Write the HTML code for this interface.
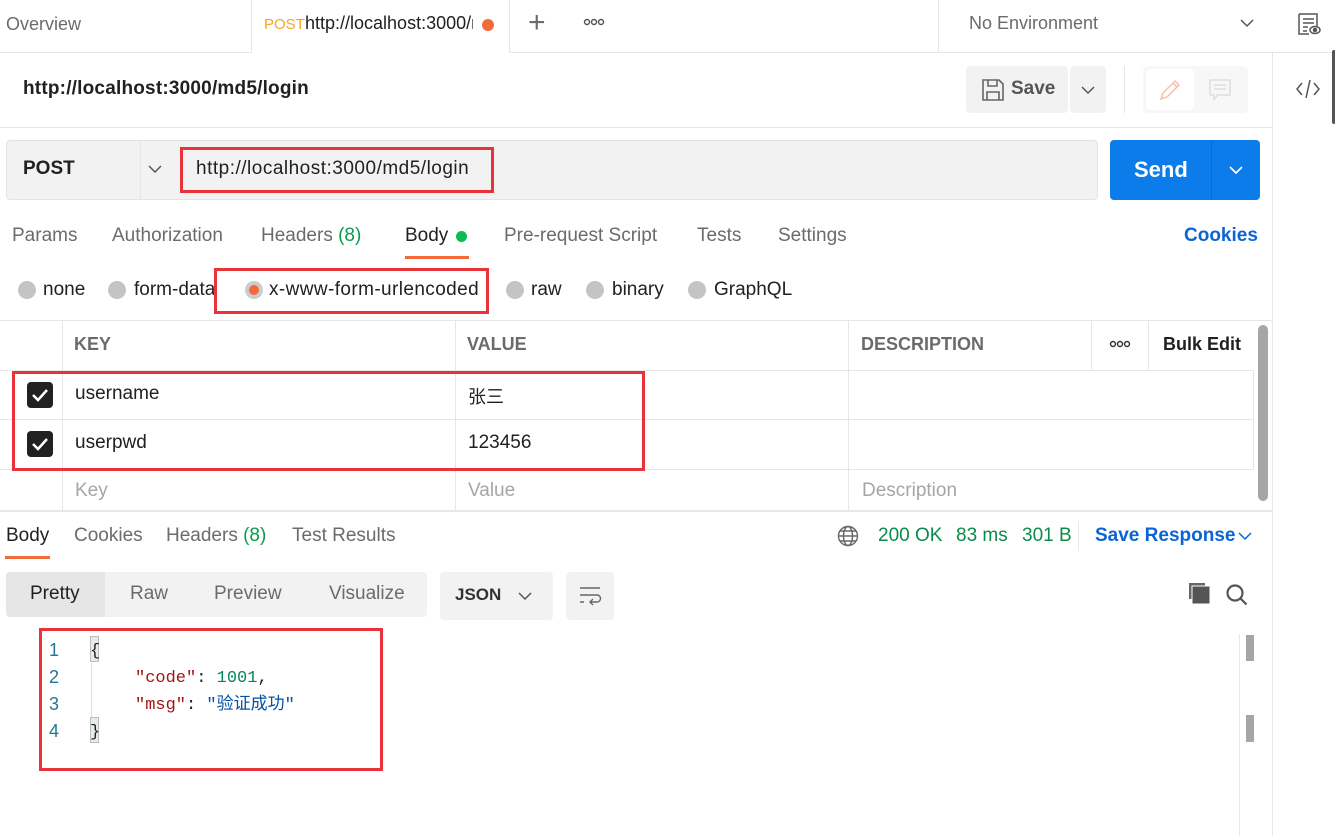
<!DOCTYPE html>
<html><head><meta charset="utf-8"><style>
*{margin:0;padding:0;box-sizing:border-box}
body{width:1335px;height:836px;position:relative;overflow:hidden;background:#fff;font-family:"Liberation Sans","Noto Sans CJK SC",sans-serif;font-size:19px;color:#212121}
.a{position:absolute;white-space:nowrap}
.g{color:#6b6b6b}
.red{position:absolute;border:3px solid #e8333a}
.hl{position:absolute;background:#e6e6e6}
.vl{position:absolute;background:#e6e6e6;width:1px}
.rad{position:absolute;width:18px;height:18px;border-radius:50%;background:#c4c4c4}
.cb{position:absolute;width:26px;height:26px;background:#212121;border-radius:4px}
.mono{font-family:"Liberation Mono","Noto Sans CJK SC",monospace;font-size:17px}
</style></head><body>
<!-- top bar -->
<div class="hl" style="left:0;top:52px;width:1335px;height:1px"></div>
<div class="a g" style="left:6px;top:14px;font-size:18px">Overview</div>
<div class="a" style="left:251px;top:0;width:259px;height:53px;background:#fff;border-left:1px solid #e6e6e6;border-right:1px solid #e6e6e6"></div>
<div class="a" style="left:264px;top:16px;font-size:15px;color:#f5a623">POST</div>
<div class="a" style="left:305px;top:13px;width:168px;overflow:hidden;font-size:18px">http://localhost:3000/md5/login</div>
<div class="a" style="left:482px;top:19px;width:12px;height:12px;border-radius:50%;background:#f26b3a"></div>
<div class="a g" style="left:528px;top:6px;font-size:30px;font-weight:300">+</div>
<svg class="a" style="left:583px;top:18px" width="22" height="8" viewBox="0 0 22 8" fill="none" stroke="#555" stroke-width="1.4"><circle cx="4" cy="4" r="2.5"/><circle cx="11" cy="4" r="2.5"/><circle cx="18" cy="4" r="2.5"/></svg>
<div class="vl" style="left:938px;top:0;height:53px"></div>
<div class="a g" style="left:969px;top:13px;font-size:18px">No Environment</div>
<svg class="a" style="left:1240px;top:16px" width="14" height="14" viewBox="0 0 14 14"><path d="M1 4l6 6 6-6" fill="none" stroke="#555" stroke-width="1.5"/></svg>
<svg class="a" style="left:1297px;top:12px" width="24" height="24" viewBox="0 0 24 24" fill="none" stroke="#555" stroke-width="1.5"><path d="M2 2h18v12M2 2v20h10M6 7h11M6 11h11M6 15h5M6 19h4"/><ellipse cx="18" cy="18" rx="5" ry="3.5"/><circle cx="18" cy="18" r="1.5" fill="#555"/></svg>
<!-- right sidebar -->
<div class="vl" style="left:1272px;top:53px;height:783px"></div>
<div class="a" style="left:1332px;top:50px;width:4px;height:74px;background:#555;border-radius:3px"></div>
<svg class="a" style="left:1295px;top:78px" width="26" height="22" viewBox="0 0 26 22" fill="none" stroke="#555" stroke-width="1.5"><path d="M7 5l-5 6 5 6M19 5l5 6-5 6M15 2l-4 18"/></svg>
<!-- title row -->
<div class="a" style="left:23px;top:78px;font-size:19px;font-weight:bold;color:#212121;letter-spacing:0.2px">http://localhost:3000/md5/login</div>
<div class="a" style="left:966px;top:66px;width:102px;height:47px;background:#f2f2f2;border-radius:4px"></div>
<svg class="a" style="left:981px;top:78px" width="24" height="24" viewBox="0 0 24 24" fill="none" stroke="#666" stroke-width="1.6"><path d="M2 2h16l4 4v16H2z M7 2v6h9V2 M6 22v-8h12v8"/></svg>
<div class="a" style="left:1011px;top:78px;font-size:19px;font-weight:bold;color:#555">Save</div>
<div class="a" style="left:1070px;top:66px;width:36px;height:47px;background:#f2f2f2;border-radius:4px"></div>
<svg class="a" style="left:1080px;top:84px" width="16" height="12" viewBox="0 0 16 12"><path d="M2 3l6 6 6-6" fill="none" stroke="#555" stroke-width="1.5"/></svg>
<div class="vl" style="left:1124px;top:66px;height:47px"></div>
<div class="a" style="left:1143px;top:66px;width:105px;height:47px;background:#f7f7f7;border-radius:5px"></div>
<div class="a" style="left:1146px;top:69px;width:48px;height:41px;background:#fff;border-radius:4px"></div>
<svg class="a" style="left:1158px;top:78px" width="24" height="24" viewBox="0 0 24 24" fill="none" stroke="#f7c0ab" stroke-width="1.5"><path d="M3 21l2-6L17 3l4 4L9 19z M15 5l4 4"/></svg>
<svg class="a" style="left:1208px;top:78px" width="24" height="24" viewBox="0 0 24 24" fill="none" stroke="#ddd" stroke-width="1.5"><path d="M2 2h20v15H10l-4 4v-4H2z M6 7h12M6 11h12"/></svg>
<div class="hl" style="left:0;top:127px;width:1272px;height:1px"></div>
<!-- url bar -->
<div class="a" style="left:6px;top:140px;width:1092px;height:60px;background:#f2f2f2;border:1px solid #e4e4e4;border-radius:4px"></div>
<div class="vl" style="left:140px;top:141px;height:58px"></div>
<div class="a" style="left:23px;top:158px;font-weight:bold;font-size:19px">POST</div>
<svg class="a" style="left:148px;top:163px" width="14" height="12" viewBox="0 0 14 12"><path d="M1 3l6 6 6-6" fill="none" stroke="#555" stroke-width="1.5"/></svg>
<div class="red" style="left:180px;top:147px;width:314px;height:46px"></div>
<div class="a" style="left:196px;top:158px;font-size:19px;letter-spacing:0.5px">http://localhost:3000/md5/login</div>
<div class="a" style="left:1110px;top:140px;width:150px;height:60px;background:#0b7cea;border-radius:4px"></div>
<div class="a" style="left:1211px;top:140px;width:1px;height:60px;background:#0a6ccc"></div>
<div class="a" style="left:1134px;top:157px;font-size:22px;font-weight:bold;color:#fff">Send</div>
<svg class="a" style="left:1228px;top:164px" width="16" height="12" viewBox="0 0 16 12"><path d="M2 3l6 6 6-6" fill="none" stroke="#fff" stroke-width="1.7"/></svg>
<!-- tabs -->
<div class="a g" style="left:12px;top:225px">Params</div>
<div class="a g" style="left:112px;top:225px">Authorization</div>
<div class="a g" style="left:261px;top:225px">Headers <span style="color:#0c9a4e">(8)</span></div>
<div class="a" style="left:405px;top:225px">Body</div>
<div class="a" style="left:456px;top:231px;width:11px;height:11px;border-radius:50%;background:#0cbb52"></div>
<div class="a" style="left:405px;top:256px;width:64px;height:3px;background:#f26b3a"></div>
<div class="a g" style="left:504px;top:225px">Pre-request Script</div>
<div class="a g" style="left:697px;top:225px">Tests</div>
<div class="a g" style="left:778px;top:225px">Settings</div>
<div class="a" style="left:1184px;top:225px;font-weight:bold;color:#0b64d4">Cookies</div>
<!-- radios -->
<div class="rad" style="left:18px;top:281px"></div><div class="a" style="left:43px;top:279px">none</div>
<div class="rad" style="left:108px;top:281px"></div><div class="a" style="left:134px;top:279px">form-data</div>
<div class="rad" style="left:245px;top:281px;background:#ccc"></div><div class="a" style="left:249px;top:285px;width:10px;height:10px;border-radius:50%;background:#f26b3a"></div>
<div class="a" style="left:269px;top:279px;letter-spacing:0.4px">x-www-form-urlencoded</div>
<div class="red" style="left:214px;top:268px;width:275px;height:46px"></div>
<div class="rad" style="left:506px;top:281px"></div><div class="a" style="left:531px;top:279px">raw</div>
<div class="rad" style="left:586px;top:281px"></div><div class="a" style="left:612px;top:279px">binary</div>
<div class="rad" style="left:688px;top:281px"></div><div class="a" style="left:714px;top:279px">GraphQL</div>
<!-- table -->
<div class="hl" style="left:0;top:320px;width:1272px;height:1px"></div>
<div class="hl" style="left:0;top:370px;width:1254px;height:1px"></div>
<div class="hl" style="left:0;top:419px;width:1254px;height:1px"></div>
<div class="hl" style="left:0;top:469px;width:1254px;height:1px"></div>
<div class="vl" style="left:62px;top:320px;height:191px"></div>
<div class="vl" style="left:455px;top:320px;height:191px"></div>
<div class="vl" style="left:848px;top:320px;height:191px"></div>
<div class="vl" style="left:1091px;top:320px;height:50px"></div>
<div class="vl" style="left:1148px;top:320px;height:50px"></div>
<div class="vl" style="left:1253px;top:370px;height:99px"></div>
<div class="a" style="left:1258px;top:325px;width:10px;height:176px;background:#a6a6a6;border-radius:5px"></div>
<div class="a g" style="left:74px;top:334px;font-weight:bold;font-size:18px">KEY</div>
<div class="a g" style="left:467px;top:334px;font-weight:bold;font-size:18px">VALUE</div>
<div class="a g" style="left:861px;top:334px;font-weight:bold;font-size:18px">DESCRIPTION</div>
<svg class="a" style="left:1109px;top:340px" width="22" height="8" viewBox="0 0 22 8" fill="none" stroke="#333" stroke-width="1.4"><circle cx="4" cy="4" r="2.5"/><circle cx="11" cy="4" r="2.5"/><circle cx="18" cy="4" r="2.5"/></svg>
<div class="a" style="left:1163px;top:334px;font-weight:bold;font-size:18px">Bulk Edit</div>
<div class="cb" style="left:27px;top:382px"></div>
<svg class="a" style="left:31px;top:387px" width="18" height="16" viewBox="0 0 18 16"><path d="M2 8l5 5 9-10" fill="none" stroke="#fff" stroke-width="2.5"/></svg>
<div class="cb" style="left:27px;top:431px"></div>
<svg class="a" style="left:31px;top:436px" width="18" height="16" viewBox="0 0 18 16"><path d="M2 8l5 5 9-10" fill="none" stroke="#fff" stroke-width="2.5"/></svg>
<div class="a" style="left:75px;top:383px">username</div>
<div class="a" style="left:468px;top:383px;font-size:18px">张三</div>
<div class="a" style="left:75px;top:432px">userpwd</div>
<div class="a" style="left:468px;top:432px">123456</div>
<div class="red" style="left:12px;top:371px;width:633px;height:100px"></div>
<div class="a" style="left:75px;top:480px;color:#a6a6a6">Key</div>
<div class="a" style="left:468px;top:480px;color:#a6a6a6">Value</div>
<div class="a" style="left:862px;top:480px;color:#a6a6a6">Description</div>
<div class="a" style="left:0;top:510px;width:1272px;height:2px;background:#e8e8e8"></div>
<!-- response -->
<div class="a" style="left:6px;top:525px">Body</div>
<div class="a" style="left:5px;top:556px;width:45px;height:3px;background:#f26b3a"></div>
<div class="a g" style="left:74px;top:525px">Cookies</div>
<div class="a g" style="left:166px;top:525px">Headers <span style="color:#0c9a4e">(8)</span></div>
<div class="a g" style="left:292px;top:525px">Test Results</div>
<svg class="a" style="left:837px;top:525px" width="22" height="22" viewBox="0 0 22 22" fill="none" stroke="#666" stroke-width="1.4"><circle cx="11" cy="11" r="9.5"/><ellipse cx="11" cy="11" rx="4.5" ry="9.5"/><path d="M1.5 11h19M3 6h16M3 16h16"/></svg>
<div class="a" style="left:878px;top:525px;color:#0c8a4a">200 OK</div>
<div class="a" style="left:956px;top:525px;color:#0c8a4a">83 ms</div>
<div class="a" style="left:1022px;top:525px;color:#0c8a4a">301 B</div>
<div class="vl" style="left:1078px;top:521px;height:30px"></div>
<div class="a" style="left:1095px;top:525px;font-weight:bold;color:#0b64d4">Save Response</div>
<svg class="a" style="left:1238px;top:530px" width="14" height="12" viewBox="0 0 14 12"><path d="M1 3l6 6 6-6" fill="none" stroke="#0b64d4" stroke-width="1.5"/></svg>
<div class="a" style="left:6px;top:572px;width:421px;height:45px;background:#f2f2f2;border-radius:4px"></div>
<div class="a" style="left:6px;top:572px;width:99px;height:45px;background:#e6e6e6;border-radius:4px 0 0 4px"></div>
<div class="a" style="left:30px;top:583px">Pretty</div>
<div class="a g" style="left:130px;top:583px">Raw</div>
<div class="a g" style="left:214px;top:583px">Preview</div>
<div class="a g" style="left:329px;top:583px">Visualize</div>
<div class="a" style="left:440px;top:572px;width:113px;height:48px;background:#f2f2f2;border-radius:4px"></div>
<div class="a" style="left:455px;top:585px;font-weight:bold;font-size:17px;color:#333">JSON</div>
<svg class="a" style="left:518px;top:590px" width="14" height="12" viewBox="0 0 14 12"><path d="M1 3l6 6 6-6" fill="none" stroke="#555" stroke-width="1.5"/></svg>
<div class="a" style="left:566px;top:572px;width:48px;height:48px;background:#f2f2f2;border-radius:4px"></div>
<svg class="a" style="left:577px;top:584px" width="26" height="24" viewBox="0 0 26 24" fill="none" stroke="#666" stroke-width="1.4"><path d="M3 4h20M3 11h17a3.5 3.5 0 0 1 0 7h-6M3 18h4M16 15l-3 3 3 3"/></svg>
<svg class="a" style="left:1188px;top:582px" width="24" height="24" viewBox="0 0 24 24"><rect x="1" y="1" width="16" height="16" fill="#666"/><rect x="4" y="4" width="18" height="18" fill="#555" stroke="#fff" stroke-width="1"/></svg>
<svg class="a" style="left:1225px;top:583px" width="24" height="24" viewBox="0 0 24 24" fill="none" stroke="#555" stroke-width="2.2"><circle cx="10" cy="10" r="7.5"/><path d="M15.5 15.5l6 6"/></svg>
<!-- code -->
<div class="vl" style="left:1239px;top:634px;height:202px"></div>
<div class="a" style="left:1246px;top:635px;width:8px;height:26px;background:#a6a6a6"></div>
<div class="a" style="left:1246px;top:715px;width:8px;height:27px;background:#a6a6a6"></div>
<div class="a" style="left:91px;top:663px;width:1px;height:55px;background:#ddd"></div>
<div class="a" style="left:49px;top:637px;color:#237893;line-height:27px;font-size:18px">1<br>2<br>3<br>4</div>
<div class="a" style="left:90px;top:636px;width:9px;height:26px;background:#e4eee4;border:1px solid #bbb"></div>
<div class="a" style="left:90px;top:717px;width:9px;height:26px;background:#e4eee4;border:1px solid #bbb"></div>
<div class="a mono" style="left:90px;top:638px;line-height:27px">{<br><span style="padding-left:45px"></span><span style="color:#a31515">"code"</span>: <span style="color:#098658">1001</span>,<br><span style="padding-left:45px"></span><span style="color:#a31515">"msg"</span>: <span style="color:#0451a5">"验证成功"</span><br>}</div>
<div class="red" style="left:39px;top:628px;width:344px;height:143px"></div>
</body></html>
